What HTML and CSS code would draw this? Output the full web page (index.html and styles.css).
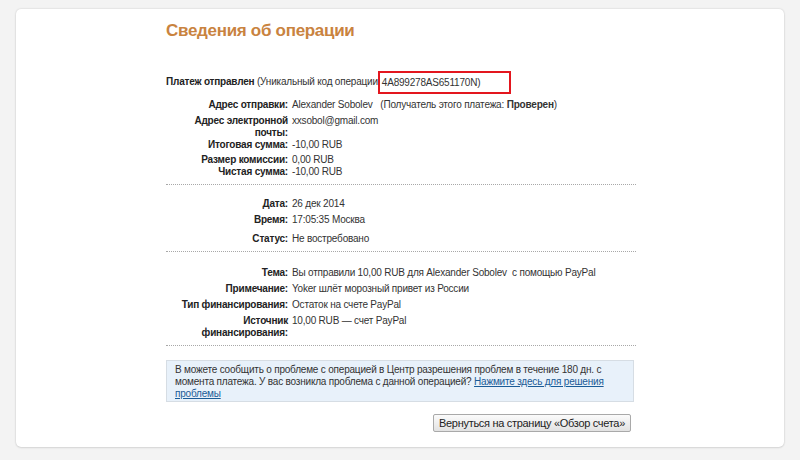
FILE: index.html
```html
<!DOCTYPE html>
<html lang="ru">
<head>
<meta charset="utf-8">
<title>Сведения об операции</title>
<link rel="stylesheet" href="styles.css">
</head>
<body>
<div class="card">
  <div class="content">
    <h1 class="title">Сведения об операции</h1>
    <p class="sent"><b>Платеж отправлен</b> (Уникальный код операции<span class="code">4A899278AS651170N)</span></p>

    <div class="rows first">
      <div class="row"><div class="lbl">Адрес отправки:</div><div class="val">Alexander Sobolev &nbsp;&nbsp;(Получатель этого платежа: <b>Проверен</b>)</div></div>
      <div class="row mt4"><div class="lbl">Адрес электронной почты:</div><div class="val">xxsobol@gmail.com</div></div>
      <div class="row"><div class="lbl">Итоговая сумма:</div><div class="val">-10,00 RUB</div></div>
      <div class="row mt3"><div class="lbl">Размер комиссии:</div><div class="val">0,00 RUB</div></div>
      <div class="row"><div class="lbl">Чистая сумма:</div><div class="val">-10,00 RUB</div></div>
    </div>
    <hr class="sep">

    <div class="rows">
      <div class="row"><div class="lbl">Дата:</div><div class="val">26 дек 2014</div></div>
      <div class="row mt4"><div class="lbl">Время:</div><div class="val">17:05:35 Москва</div></div>
      <div class="row mt7"><div class="lbl">Статус:</div><div class="val">Не востребовано</div></div>
    </div>
    <hr class="sep">

    <div class="rows third">
      <div class="row"><div class="lbl">Тема:</div><div class="val">Вы отправили 10,00 RUB для Alexander Sobolev &nbsp;с помощью PayPal</div></div>
      <div class="row mt4"><div class="lbl">Примечание:</div><div class="val">Yoker шлёт морозный привет из России</div></div>
      <div class="row mt4"><div class="lbl">Тип финансирования:</div><div class="val">Остаток на счете PayPal</div></div>
      <div class="row mt4"><div class="lbl">Источник финансирования:</div><div class="val">10,00 RUB — счет PayPal</div></div>
    </div>
    <hr class="sep">

    <div class="notice">В можете сообщить о проблеме с операцией в Центр разрешения проблем в течение 180 дн. с момента платежа. У вас возникла проблема с данной операцией? <a href="#">Нажмите здесь для решения проблемы</a></div>

    <div class="actions"><button class="btn" type="button">Вернуться на страницу «Обзор счета»</button></div>
  </div>
</div>
</body>
</html>
```

FILE: styles.css
```css
html, body {
  margin: 0;
  padding: 0;
  background: #f3f3f3;
}
body {
  font-family: "Liberation Sans", Arial, sans-serif;
  font-size: 10px;
  letter-spacing: -0.2px;
  color: #333;
  padding: 9px 16px 13px;
}
.card {
  width: 768px;
  height: 438px;
  box-sizing: border-box;
  background: #fff;
  border-radius: 5px;
  box-shadow: 0 0 2px rgba(0,0,0,0.18), 0 1px 2px rgba(0,0,0,0.08);
  padding: 11px 0 0 150px;
}
.content {
  width: 470px;
}
.title {
  margin: 0;
  font-size: 17px;
  letter-spacing: -0.3px;
  line-height: 22px;
  font-weight: bold;
  color: #c9833f;
}
.sent {
  margin: 29px 0 0;
  line-height: 20px;
  height: 23px;
}
.sent b { color: #222; }
.code {
  display: inline-block;
  border: 2px solid #e3161e;
  padding: 1px 29px 1px 2px;
  line-height: 17px;
  margin-left: 0;
  vertical-align: middle;
}
.rows.first { margin-top: 5px; }
.rows { margin-top: 13px; }
.rows.third { margin-top: 15px; }
.row {
  display: grid;
  grid-template-columns: 122px 1fr;
  column-gap: 4px;
  line-height: 12px;
}
.lbl {
  text-align: right;
  font-weight: bold;
  color: #222;
  padding-left: 12px;
}
.val { color: #333; }
.mt3 { margin-top: 3px; }
.mt4 { margin-top: 4px; }
.mt7 { margin-top: 7px; }
.sep {
  border: 0;
  border-top: 1px dotted #a8a8a8;
  margin: 6px 0 0;
  height: 0;
}
.notice {
  margin-top: 14px;
  background: #e8f1fa;
  border: 1px solid #d6dde4;
  padding: 3px 8px 1px;
  line-height: 12px;
  width: 450px;
}
.notice a { color: #1a5b97; }
.actions {
  display: flex;
  justify-content: flex-end;
  margin-top: 12px;
  width: 465px;
}
.btn {
  font-family: "Liberation Sans", Arial, sans-serif;
  font-size: 11px;
  letter-spacing: -0.3px;
  color: #222;
  height: 18px;
  line-height: 14px;
  padding: 0 5px;
  background: linear-gradient(#fbfbfb, #e2e2e2);
  border: 1px solid #a9a9a9;
  border-radius: 2px;
}
```
